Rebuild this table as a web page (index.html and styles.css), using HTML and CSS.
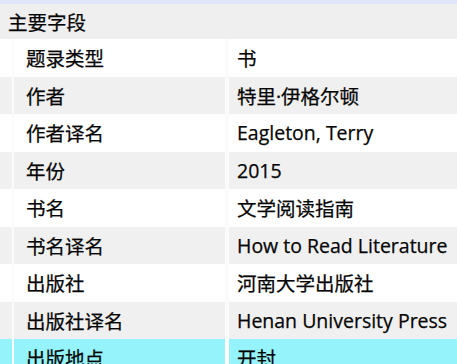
FILE: index.html
```html
<!DOCTYPE html>
<html lang="zh-CN">
<head>
<meta charset="utf-8">
<link rel="stylesheet" href="styles.css">
</head>
<body>
<div class="top"></div>
<div class="section">主要字段</div>
<div class="table">
  <div class="row"><div class="gutter"></div><div class="label">题录类型</div><div class="value">书</div></div>
  <div class="row alt"><div class="gutter"></div><div class="label">作者</div><div class="value">特里·伊格尔顿</div></div>
  <div class="row"><div class="gutter"></div><div class="label">作者译名</div><div class="value">Eagleton, Terry</div></div>
  <div class="row alt"><div class="gutter"></div><div class="label">年份</div><div class="value">2015</div></div>
  <div class="row"><div class="gutter"></div><div class="label">书名</div><div class="value">文学阅读指南</div></div>
  <div class="row alt"><div class="gutter"></div><div class="label">书名译名</div><div class="value">How to Read Literature</div></div>
  <div class="row"><div class="gutter"></div><div class="label">出版社</div><div class="value">河南大学出版社</div></div>
  <div class="row alt"><div class="gutter"></div><div class="label">出版社译名</div><div class="value">Henan University Press</div></div>
  <div class="row sel"><div class="gutter"></div><div class="label">出版地点</div><div class="value">开封</div></div>
</div>
</body>
</html>
```
FILE: styles.css
```css
html, body {
  margin: 0;
  padding: 0;
  background: #ffffff;
  overflow: hidden;
}
body {
  width: 457px;
  height: 364px;
  font-family: "Open Sans", "Noto Sans CJK SC", sans-serif;
  font-size: 19.5px;
  color: #050505;
  -webkit-text-stroke: 0.25px #050505;
}
.top {
  height: 4px;
  background: #dfe8f6;
}
.section {
  height: 35px;
  background: #efefef;
  display: flex;
  align-items: center;
  padding-left: 8px;
}
.row {
  height: 37.5px;
  display: grid;
  grid-template-columns: 14px 215px 1fr;
  background: #ffffff;
}
.row > div {
  display: flex;
  align-items: center;
  white-space: nowrap;
  overflow: hidden;
}
.gutter {
  border-right: 2px solid #fbfbfb;
}
.label {
  padding-left: 12px;
  border-right: 4px solid #fbfbfb;
}
.value {
  padding-left: 8px;
}
.row.alt > div {
  background: #f0f0f0;
}
.row.sel > div {
  background: #95f4fb;
}
.row.sel .gutter, .row.sel .label {
  border-right-color: #ffffff;
}
```
